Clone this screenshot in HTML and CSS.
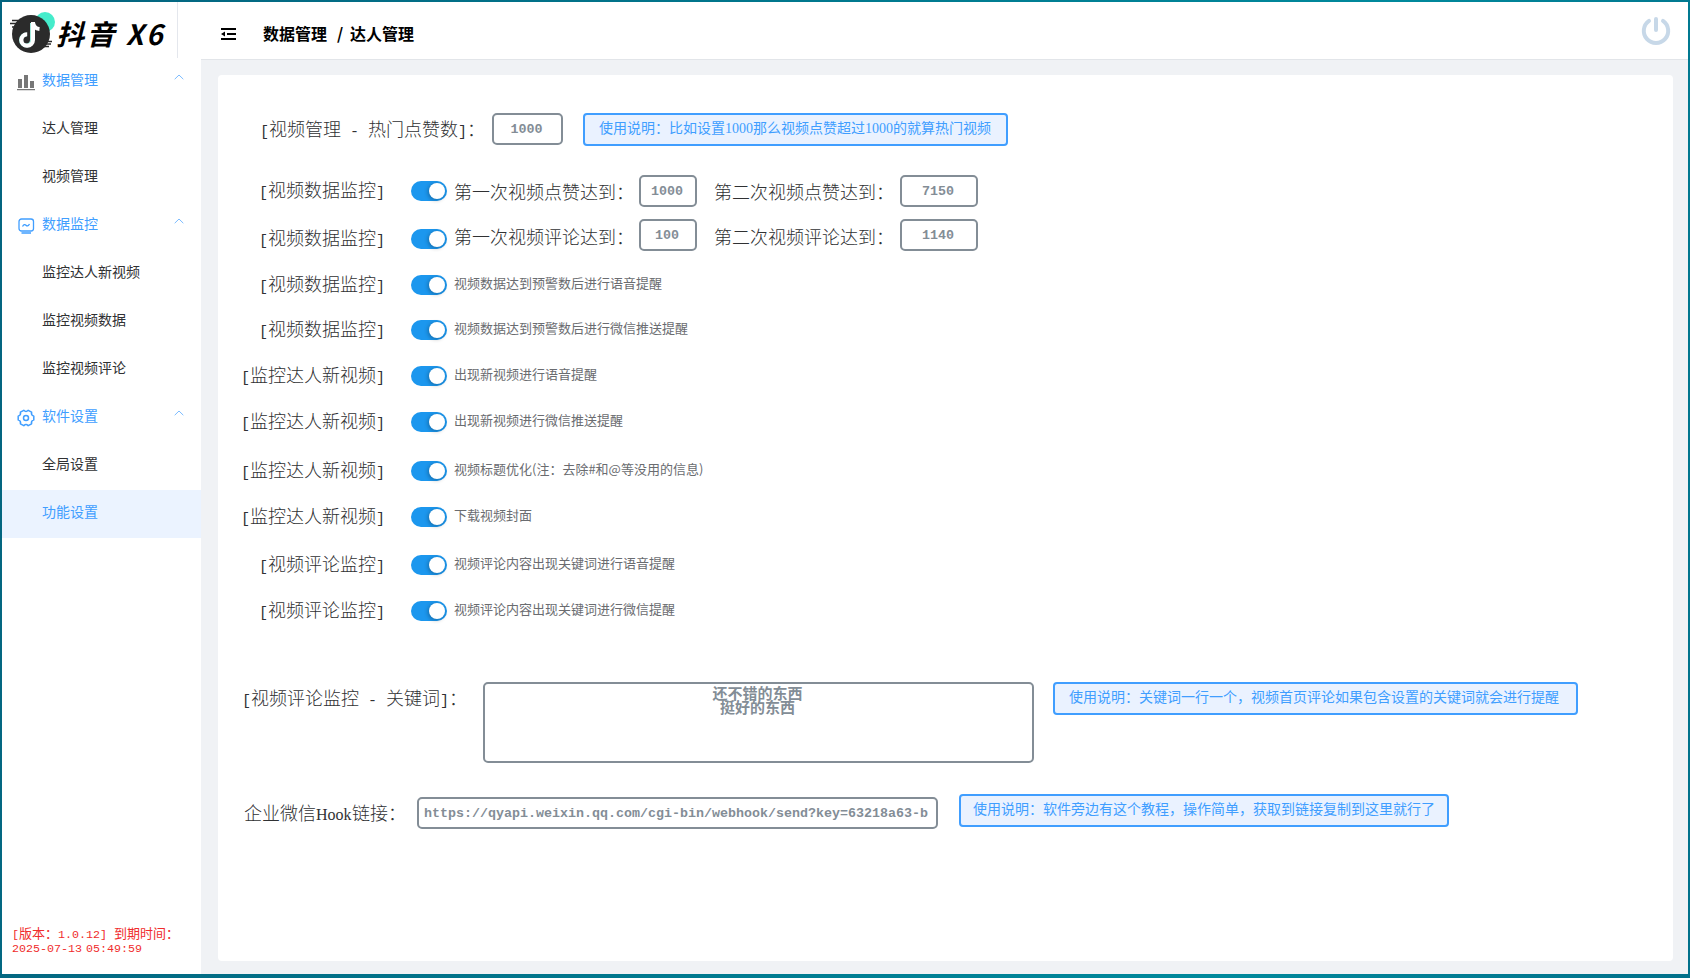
FILE: index.html
```
<!doctype html>
<html lang="zh-CN">
<head>
    <meta charset="UTF-8">
    <title>抖音 X6</title>
    <link rel="stylesheet" href="styles.css">
</head>
<body>
<div class="window">
    <div class="sidebar">
        <div class="logo">
            <svg class="logo-icon" width="50" height="46" viewBox="0 0 50 46">
                <circle cx="36" cy="14" r="10" fill="#45eccb"/>
                <circle cx="22" cy="26" r="19" fill="#2b2b2b"/>
                <path d="M3 12.500h9M1 15.500h10M3 19h6M36 33.500h7M34 38.500h6M34 36h8" stroke="#2b2b2b" stroke-width="1.500"/>
                <path d="M23 15v17a5.500 5.500 0 1 1-5.500-5.500" fill="none" stroke="#9fe9dc" stroke-width="4"/>
                <path d="M24 14v18a5.800 5.800 0 1 1-5.800-5.800M24 14.500q1 6 6.500 6.500" fill="none" stroke="#fff" stroke-width="4"/>
            </svg>
            <span class="logo-text">抖音 X6</span>
        </div>
        <ul class="menu">
            <li class="menu-title">
                <svg class="menu-icon" width="18" height="18" viewBox="0 0 18 18"><path d="M1 6h4v9H1zM7 2h4v13H7zM13 8h4v7h-4zM0 16h18v1.300H0z" fill="#777"/></svg>
                数据管理
                <svg class="arrow" width="10" height="6" viewBox="0 0 10 6"><path d="M.7 5.200L5 1l4.300 4.200"/></svg>
            </li>
            <li class="menu-item">达人管理</li>
            <li class="menu-item">视频管理</li>
            <li class="menu-title">
                <svg class="menu-icon" width="18" height="18" viewBox="0 0 18 18" fill="none" stroke="#409eff" stroke-width="1.300"><rect x="2" y="2" width="14.500" height="12" rx="2.500"/><path d="M5.500 9.500q1.800-3 3.500-1.200t3.500-1.300M4.500 16h9.500"/></svg>
                数据监控
                <svg class="arrow" width="10" height="6" viewBox="0 0 10 6"><path d="M.7 5.200L5 1l4.300 4.200"/></svg>
            </li>
            <li class="menu-item">监控达人新视频</li>
            <li class="menu-item">监控视频数据</li>
            <li class="menu-item">监控视频评论</li>
            <li class="menu-title">
                <svg class="menu-icon" width="18" height="18" viewBox="0 0 18 18" fill="none" stroke="#409eff" stroke-width="1.500" stroke-linejoin="round"><path d="M16.800 7.100v3.800Q13.800 11.800 14.600 14.800L11.200 16.700Q9 14.500 6.800 16.700L3.400 14.800Q4.200 11.800 1.200 10.900V7.100Q4.200 6.200 3.400 3.200L6.800 1.300Q9 3.500 11.200 1.300L14.600 3.200Q13.800 6.200 16.800 7.100z"/><circle cx="9" cy="9" r="2.500"/></svg>
                软件设置
                <svg class="arrow" width="10" height="6" viewBox="0 0 10 6"><path d="M.7 5.200L5 1l4.300 4.200"/></svg>
            </li>
            <li class="menu-item">全局设置</li>
            <li class="menu-item active">功能设置</li>
        </ul>
        <div class="version">
            <p><span class="mono">[</span>版本：<span class="mono">1.0.12] </span>到期时间：</p>
            <p class="expire">2025-07-13 05:49:59</p>
        </div>
    </div>
    <div class="main">
        <div class="header">
            <svg class="fold" width="16" height="14" viewBox="0 0 16 14"><path d="M1 1h15v2H1zM7 6h9v2H7zM1 11h15v2H1zM1 7l4-2.500v5z"/></svg>
            <span class="crumb">数据管理</span>
            <span class="slash">/</span>
            <span class="crumb">达人管理</span>
            <svg class="power" width="30" height="30" viewBox="0 0 30 30" fill="none" stroke="#c7d8e8" stroke-width="4" stroke-linecap="round"><path d="M8 4.800a12.200 12.200 0 1 0 14 0M15 3v11"/></svg>
        </div>
        <div class="card">
            <!-- 热门点赞数 -->
            <div class="line hot">
                <label class="name"><span class="half">[</span>视频管理<span class="half"> - </span>热门点赞数<span class="half">]</span>：</label>
                <input type="text" class="ipt ipt-hot" value="1000">
                <span class="note note-hot">使用说明：比如设置1000那么视频点赞超过1000的就算热门视频</span>
            </div>
            <!-- 开关 -->
            <div class="switches">
                <div class="line">
                    <span class="name tag"><span class="half">[</span>视频数据监控<span class="half">]</span></span>
                    <span class="switch"></span>
                    <span class="name cond">第一次视频点赞达到：</span>
                    <input type="text" class="ipt ipt-first" value="1000">
                    <span class="name cond">第二次视频点赞达到：</span>
                    <input type="text" class="ipt ipt-second" value="7150">
                </div>
                <div class="line line-comment">
                    <span class="name tag"><span class="half">[</span>视频数据监控<span class="half">]</span></span>
                    <span class="switch"></span>
                    <span class="name cond">第一次视频评论达到：</span>
                    <input type="text" class="ipt ipt-first" value="100">
                    <span class="name cond">第二次视频评论达到：</span>
                    <input type="text" class="ipt ipt-second" value="1140">
                </div>
                <div class="line">
                    <span class="name tag"><span class="half">[</span>视频数据监控<span class="half">]</span></span>
                    <span class="switch"></span>
                    <span class="desc">视频数据达到预警数后进行语音提醒</span>
                </div>
                <div class="line">
                    <span class="name tag"><span class="half">[</span>视频数据监控<span class="half">]</span></span>
                    <span class="switch"></span>
                    <span class="desc">视频数据达到预警数后进行微信推送提醒</span>
                </div>
                <div class="line">
                    <span class="name tag"><span class="half">[</span>监控达人新视频<span class="half">]</span></span>
                    <span class="switch"></span>
                    <span class="desc">出现新视频进行语音提醒</span>
                </div>
                <div class="line">
                    <span class="name tag"><span class="half">[</span>监控达人新视频<span class="half">]</span></span>
                    <span class="switch"></span>
                    <span class="desc">出现新视频进行微信推送提醒</span>
                </div>
                <div class="line">
                    <span class="name tag"><span class="half">[</span>监控达人新视频<span class="half">]</span></span>
                    <span class="switch"></span>
                    <span class="desc">视频标题优化(注：去除#和@等没用的信息)</span>
                </div>
                <div class="line">
                    <span class="name tag"><span class="half">[</span>监控达人新视频<span class="half">]</span></span>
                    <span class="switch"></span>
                    <span class="desc">下载视频封面</span>
                </div>
                <div class="line">
                    <span class="name tag"><span class="half">[</span>视频评论监控<span class="half">]</span></span>
                    <span class="switch"></span>
                    <span class="desc">视频评论内容出现关键词进行语音提醒</span>
                </div>
                <div class="line">
                    <span class="name tag"><span class="half">[</span>视频评论监控<span class="half">]</span></span>
                    <span class="switch"></span>
                    <span class="desc">视频评论内容出现关键词进行微信提醒</span>
                </div>
            </div>
            <!-- 关键词 -->
            <div class="line keyword">
                <label class="name"><span class="half">[</span>视频评论监控<span class="half"> - </span>关键词<span class="half">]</span>：</label>
                <div class="words">还不错的东西<br>挺好的东西</div>
                <span class="note note-word">使用说明：关键词一行一个，视频首页评论如果包含设置的关键词就会进行提醒</span>
            </div>
            <!-- 企业微信 -->
            <div class="line hook">
                <label class="name">企业微信<span class="en">Hook</span>链接：</label>
                <input type="text" class="ipt ipt-hook" value="https://qyapi.weixin.qq.com/cgi-bin/webhook/send?key=63218a63-b">
                <span class="note note-hook">使用说明：软件旁边有这个教程，操作简单，获取到链接复制到这里就行了</span>
            </div>
        </div>
    </div>
</div>
</body>
</html>
```
FILE: styles.css
```
/*reset*/
body, ul, li, p, input {
    margin: 0;
    padding: 0;
}
* { box-sizing: border-box; }
ul { list-style: none; }
svg { flex: none; }

body {
    height: 978px;
    overflow: hidden;
    padding: 2px 2px 4px;
    background: linear-gradient(100deg, #04647f, #00768c 40%, #00899c 75%, #01708a);
    font: 14px/1 "Liberation Serif", "Noto Sans CJK SC", sans-serif;
}
.window {
    display: flex;
    height: 972px;
    background-color: #fff;
}

/* 左侧菜单 */
.sidebar {
    display: flex;
    flex-direction: column;
    width: 199px;
    flex: none;
}
.logo {
    display: flex;
    width: 176px;
    height: 56px;
    padding: 6px 0 0 7px;
    border-right: 1px solid #e4e7ed;
}
.logo-text {
    margin: 11px 0 0 -3px;
    font: italic bold 28px/28px "Noto Sans CJK SC", sans-serif;
    letter-spacing: 2.500px;
    white-space: nowrap;
    color: #000;
}
.menu-title, .menu-item {
    display: flex;
    align-items: center;
    height: 48px;
    padding: 0 17px 2px 40px;
    color: #303133;
}
.menu-title {
    padding-left: 15px;
    color: #409eff;
}
.menu-icon { margin: 2px 7px 0 0; }
.arrow {
    margin: -8px 0 0 auto;
    fill: none;
    stroke: #7cbcff;
}
.active {
    background-color: #ebf3ff;
    color: #409eff;
}
.version {
    margin: auto 0 17px 10px;
    font-size: 13px;
    line-height: 15px;
    color: #f02c2c;
    white-space: nowrap;
}
.mono {
    font-family: "Liberation Mono", monospace;
    font-size: 11.670px;
    white-space: pre;
}
.expire {
    margin-top: -1px;
    font-family: "Liberation Mono", monospace;
    font-size: 11.670px;
    word-spacing: -3px;
}

/* 右侧 */
.main {
    flex: 1;
    display: flex;
    flex-direction: column;
    background-color: #f0f2f5;
}
.header {
    display: flex;
    align-items: center;
    height: 58px;
    padding: 0 17px 0 19px;
    border-bottom: 1px solid #e2e5e9;
    background-color: #fff;
    font: bold 16px/1 "Noto Sans CJK SC", sans-serif;
    color: #000;
}
.fold { margin: 7px 27px 0 0; }
.crumb, .slash { margin-top: 5px; }
.slash {
    width: 23px;
    padding-left: 3px;
    text-align: center;
}
.power { margin-left: auto; }
.card {
    flex: 1;
    margin: 15px 15px 13px 17px;
    border-radius: 4px;
    background-color: #fff;
}
.line {
    display: flex;
    align-items: center;
    white-space: nowrap;
}
.name {
    font-size: 18px;
    font-weight: 300;
    line-height: 24px;
    color: #303133;
}
/* 半角字符占 9px */
.half {
    font-family: "Liberation Mono", monospace;
    font-size: 15px;
    white-space: pre;
}
.en {
    display: inline-block;
    width: 36px;
    font-size: 16px;
}
.ipt {
    height: 32px;
    padding-right: 2px;
    border: 2px solid #838d96;
    border-radius: 5px;
    background-color: #fff;
    font: bold 13.330px/1 "Liberation Mono", monospace;
    color: #838d96;
    text-align: center;
}
.note {
    height: 33px;
    padding-left: 14px;
    border: 2px solid #409eff;
    border-radius: 4px;
    background-color: #eaf2ff;
    line-height: 27px;
    color: #409eff;
}

/* 热门点赞数 */
.hot {
    align-items: flex-start;
    height: 33px;
    margin: 38px 0 23px 42px;
}
.hot .name {
    width: 232px;
    padding-top: 5px;
}
.ipt-hot {
    width: 71px;
    margin-right: 20px;
}
.note-hot { width: 425px; }

/* 开关列表, 行高不一 */
.switches {
    display: grid;
    grid-template-rows: 48px 46px 45px 46px 46px 49px 46px 48px 46px 44px;
    align-items: start;
}
.switches .line { height: 44px; }
.tag {
    width: 167px;
    padding-top: 2px;
    text-align: right;
}
.switch {
    display: flex;
    justify-content: flex-end;
    width: 36px;
    height: 20px;
    margin: 0 7px 0 26px;
    padding: 2px;
    border-radius: 10px;
    background-color: #1c97ee;
}
.switch::after {
    content: "";
    width: 16px;
    height: 16px;
    border-radius: 50%;
    background-color: #fff;
    box-shadow: -1px 1px 4px rgba(0, 0, 0, .3);
}
.cond { width: 185px; padding-top: 4px; }
.ipt-first {
    width: 58px;
    margin-right: 17px;
}
.ipt-second { width: 78px; margin-left: 1px; }
.line-comment .ipt { margin-bottom: 8px; }
.line-comment .cond { padding: 0 0 2px; }
.desc {
    padding-bottom: 5px;
    font: 13px/18px "Noto Sans CJK SC", sans-serif;
    color: #6a6c70;
}

/* 关键词 */
.keyword {
    align-items: flex-start;
    margin: 49px 0 34px 24px;
}
.keyword .name {
    width: 241px;
    padding-top: 5px;
}
.words {
    width: 551px;
    height: 81px;
    margin-right: 19px;
    padding: 2px 2px 0 0;
    border: 2px solid #838d96;
    border-radius: 5px;
    font: bold 15px/14px "Noto Sans CJK SC", sans-serif;
    color: #838d96;
    text-align: center;
}
.note-word { width: 525px; }

/* 企业微信 */
.hook {
    align-items: flex-start;
    margin-left: 26px;
}
.hook .name {
    width: 173px;
    padding-top: 5px;
}
.ipt-hook {
    width: 521px;
    margin-right: 21px;
    text-align: left;
    padding-left: 5px;
    padding-right: 0;
}
.note-hook {
    width: 490px;
    margin-top: -3px;
    padding-left: 12px;
}
```
